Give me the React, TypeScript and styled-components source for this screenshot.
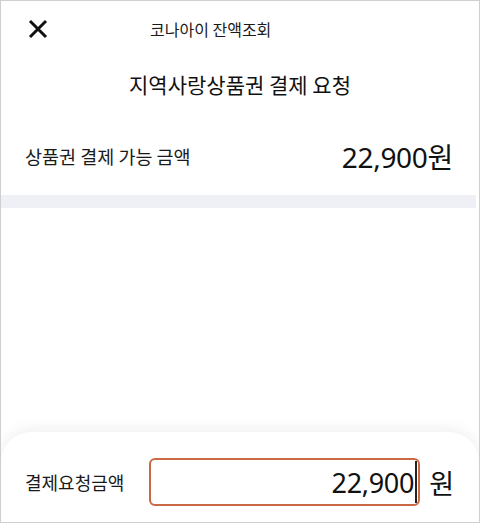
import React from "react";
import styled, { createGlobalStyle } from "styled-components";

const Global = createGlobalStyle`
  html, body { margin: 0; padding: 0; background: #fff; }
  body { font-family: "Noto Sans", "Noto Sans CJK KR", sans-serif; color: #1a1a1a; }
  * { box-sizing: border-box; }
`;

const Frame = styled.div`
  width: 480px;
  height: 523px;
  border: 1px solid #cfcfcf;
  display: flex;
  flex-direction: column;
  background: #fff;
  overflow: hidden;
`;

const Header = styled.header`
  height: 55px;
  display: flex;
  align-items: center;
  padding-left: 27px;
`;

const CloseButton = styled.button`
  width: 20px;
  height: 20px;
  padding: 0;
  border: 0;
  background: none;
  display: flex;
  align-items: center;
  justify-content: center;
`;

const HeaderTitle = styled.div`
  margin-left: 102px;
  font-size: 16px;
  line-height: 20px;
  font-family: "Noto Sans CJK KR", sans-serif;
  color: #1a1a1a;
`;

const Heading = styled.h1`
  margin: 0;
  height: 55px;
  display: flex;
  align-items: center;
  justify-content: center;
  font-size: 21px;
  font-weight: 400;
  font-family: "Noto Sans CJK KR", sans-serif;
  color: #111;
`;

const AmountRow = styled.div`
  height: 84px;
  display: flex;
  align-items: center;
  justify-content: space-between;
  padding: 6px 26px 0 24px;
`;

const Label = styled.span`
  font-size: 18.5px;
  font-family: "Noto Sans CJK KR", sans-serif;
  color: #1a1a1a;
`;

const BigAmount = styled.span`
  font-size: 28px;
  font-family: "Noto Sans", "Noto Sans CJK KR", sans-serif;
  color: #111;
  letter-spacing: -0.3px;
`;

const Divider = styled.div`
  height: 13px;
  background: #eff0f5;
  margin-right: 3px;
`;

const Spacer = styled.div`
  flex: 1;
`;

const Sheet = styled.div`
  height: 90px;
  border-radius: 30px 30px 0 0;
  background: #fff;
  box-shadow: 0 -4px 14px rgba(0, 0, 0, 0.06);
  display: flex;
  align-items: center;
  padding: 10px 25px 0 24px;
`;

const SheetLabel = styled(Label)`
  width: 125px;
  font-size: 18px;
`;

const InputBox = styled.div`
  width: 273px;
  height: 48px;
  border: 2px solid #c96a44;
  border-radius: 6px;
  display: flex;
  align-items: center;
  justify-content: flex-end;
  padding-right: 1px;
`;

const InputText = styled.span`
  font-size: 27px;
  font-family: "Noto Sans", sans-serif;
  color: #111;
  letter-spacing: -0.3px;
`;

const Caret = styled.span`
  width: 2px;
  height: 42px;
  background: #222;
  margin-left: 1px;
`;

const Unit = styled.span`
  margin-left: 9px;
  font-size: 27px;
  font-family: "Noto Sans CJK KR", sans-serif;
  color: #111;
`;

export default function App() {
  return (
    <>
      <Global />
      <Frame>
        <Header>
          <CloseButton aria-label="닫기">
            <svg width="20" height="20" viewBox="0 0 20 20">
              <path d="M2 2 L18 18 M18 2 L2 18" stroke="#111" strokeWidth="3" strokeLinecap="butt" />
            </svg>
          </CloseButton>
          <HeaderTitle>코나아이 잔액조회</HeaderTitle>
        </Header>
        <Heading>지역사랑상품권 결제 요청</Heading>
        <AmountRow>
          <Label>상품권 결제 가능 금액</Label>
          <BigAmount>22,900원</BigAmount>
        </AmountRow>
        <Divider />
        <Spacer />
        <Sheet>
          <SheetLabel>결제요청금액</SheetLabel>
          <InputBox>
            <InputText>22,900</InputText>
            <Caret />
          </InputBox>
          <Unit>원</Unit>
        </Sheet>
      </Frame>
    </>
  );
}
